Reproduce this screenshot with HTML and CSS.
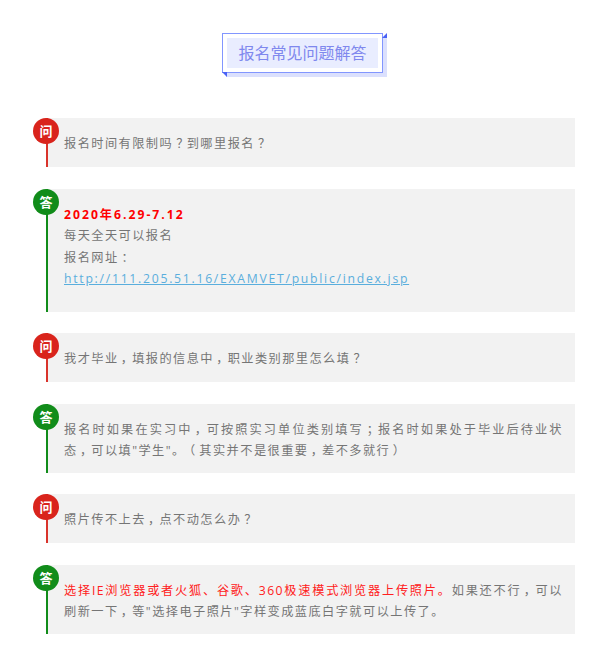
FILE: index.html
```html
<!DOCTYPE html>
<html lang="zh">
<head>
<meta charset="utf-8">
<title>报名常见问题解答</title>
<link rel="stylesheet" href="styles.css">
</head>
<body>
<div class="page">
  <div class="title-wrap">
    <div class="title-frame">
      <h1 class="title">报名常见问题解答</h1>
    </div>
  </div>
  <div class="qa q"><span class="badge">问</span><p>报名时间有限制吗<span class="p">？</span>到哪里报名<span class="p">？</span></p></div>
  <div class="qa a tall"><span class="badge">答</span><p class="date">2020年6.29-7.12</p><p>每天全天可以报名</p><p>报名网址<span class="p">：</span></p><p><a href="#">http://111.205.51.16/EXAMVET/public/index.jsp</a></p></div>
  <div class="qa q"><span class="badge">问</span><p>我才毕业<span class="p">，</span>填报的信息中<span class="p">，</span>职业类别那里怎么填<span class="p">？</span></p></div>
  <div class="qa a"><span class="badge">答</span><p>报名时如果在实习中<span class="p">，</span>可按照实习单位类别填写<span class="p">；</span>报名时如果处于毕业后待业状<span class="nb">态<span class="p">，</span></span>可以填"学生"。<span class="p">（</span>其实并不是很重要<span class="p">，</span>差不多就行<span class="p">）</span></p></div>
  <div class="qa q"><span class="badge">问</span><p>照片传不上去<span class="p">，</span>点不动怎么办<span class="p">？</span></p></div>
  <div class="qa a"><span class="badge">答</span><p><span class="red">选择IE浏览器或者火狐、谷歌、360极速模式浏览器上传照片。</span>如果还不行<span class="p">，</span>可以刷新一下<span class="p">，</span>等"选择电子照片"字样变成蓝底白字就可以上传了。</p></div>
</div>
</body>
</html>
```
FILE: styles.css
```css
* { box-sizing: border-box; }
html, body { margin: 0; padding: 0; background: #fff; }
.page {
  width: 600px;
  height: 648px;
  padding: 33px 25px 0 47px;
  font-family: "Open Sans", "Noto Sans CJK SC", sans-serif;
  overflow: hidden;
}
.title-wrap {
  display: flex;
  justify-content: flex-start;
  margin: 0 0 45px 175px;
}
.title-frame {
  position: relative;
  width: 161px;
  height: 40px;
  padding: 4px;
  background: #fff;
  border: 1px solid #8296ff;
  box-shadow: 4px 4px 0 #dbe0fd;
}
.title-frame::before,
.title-frame::after {
  content: "";
  position: absolute;
  width: 0;
  height: 0;
  border-style: solid;
}
.title-frame::before {
  top: -1px;
  right: -5px;
  border-width: 0 0 5px 5px;
  border-color: transparent transparent #4a62f5 transparent;
}
.title-frame::after {
  bottom: -5px;
  left: -1px;
  border-width: 5px 5px 0 0;
  border-color: #4a62f5 transparent transparent transparent;
  transform: rotate(90deg);
}
.title {
  margin: 0;
  height: 100%;
  background: #e9edff;
  color: #7f88ee;
  font-size: 16px;
  font-weight: 400;
  line-height: 30px;
  text-align: center;
}
.qa {
  position: relative;
  margin-bottom: 21.5px;
  padding: 15px 12px 12.5px 17px;
  background: #f2f2f2;
  color: #757575;
  font-size: 12.2px;
  line-height: 21.5px;
  letter-spacing: 1.45px;
  text-align: justify;
}
.qa::before {
  content: "";
  position: absolute;
  left: -1px;
  top: 0;
  bottom: 0;
  width: 2px;
}
.q::before { background: #d9332b; }
.a::before { background: #118c1a; }
.qa p { margin: 0; }
.a { padding-bottom: 11.3px; }
.tall { height: 123px; }
.badge {
  position: absolute;
  left: -14px;
  top: 0;
  width: 26px;
  height: 26px;
  border-radius: 50%;
  color: #fff;
  font-size: 13px;
  font-weight: 700;
  line-height: 26px;
  letter-spacing: 0;
  text-align: center;
}
.q .badge { background: #d9241c; }
.a .badge { background: #118c1a; }
.date { color: #ff0000; font-weight: 700; letter-spacing: 2px; }
.red { color: #ff2020; }
.nb { white-space: nowrap; }
.p {
  display: inline-block;
  width: 1em;
  margin-right: 1.45px;
  line-height: 1;
  letter-spacing: 0;
  text-align: center;
  font-feature-settings: "palt";
}
a { color: #5aaedd; text-decoration: underline; letter-spacing: 1.74px; }
```
